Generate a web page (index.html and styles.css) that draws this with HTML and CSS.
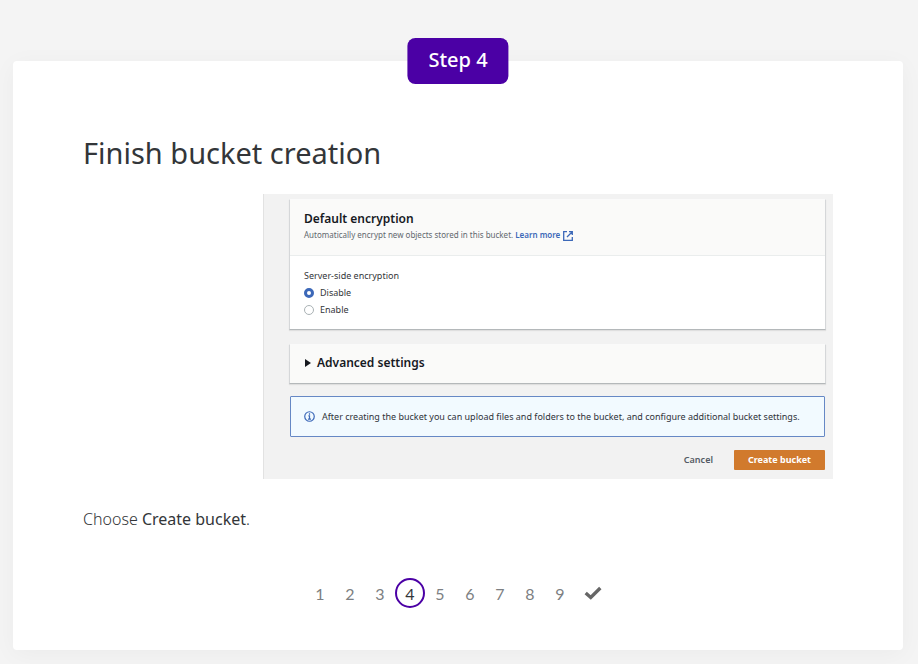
FILE: index.html
```html
<!DOCTYPE html>
<html lang="en">
<head>
<meta charset="utf-8">
<meta name="viewport" content="width=device-width, initial-scale=1">
<title>Step 4: Finish bucket creation</title>
<link rel="stylesheet" href="styles.css">
</head>
<body>
<main class="card">
  <div class="step">Step 4</div>
  <h1 class="title">Finish bucket creation</h1>

  <div class="console">
    <section class="panel">
      <header class="panel-head">
        <h2 class="panel-title">Default encryption</h2>
        <p class="hint">Automatically encrypt new objects stored in this bucket.
          <a class="learn" href="#">Learn more<svg class="external" viewBox="0 0 10 10" aria-hidden="true"><path d="M4 0.700H0.700V9.300H9.300V6M6 0.700H9.300V4M9.300 0.700L4 6"/></svg></a></p>
      </header>
      <fieldset class="options">
        <legend class="legend">Server-side encryption</legend>
        <label class="option"><input class="radio" type="radio" name="sse" checked>Disable</label>
        <label class="option"><input class="radio" type="radio" name="sse">Enable</label>
      </fieldset>
    </section>

    <details class="panel advanced">
      <summary class="panel-title summary"><svg class="caret" viewBox="0 0 6 8" aria-hidden="true"><path d="M0 0L6 4L0 8Z"/></svg>Advanced settings</summary>
    </details>

    <div class="notice">
      <svg class="info" viewBox="0 0 12 12" aria-hidden="true"><circle cx="6" cy="6" r="5.200"/><path d="M6 2.500V4M4.800 5.300H6V8.700M4.300 8.900H7.700"/></svg>
      <p class="notice-text">After creating the bucket you can upload files and folders to the bucket, and configure additional bucket settings.</p>
    </div>

    <div class="actions">
      <button class="button" type="button">Cancel</button>
      <button class="button primary" type="button">Create bucket</button>
    </div>
  </div>

  <p class="instruction">Choose <strong class="strong">Create bucket</strong>.</p>

  <nav class="pager" aria-label="Steps">
    <a class="page" href="#">1</a>
    <a class="page" href="#">2</a>
    <a class="page" href="#">3</a>
    <a class="page current" href="#" aria-current="step">4</a>
    <a class="page" href="#">5</a>
    <a class="page" href="#">6</a>
    <a class="page" href="#">7</a>
    <a class="page" href="#">8</a>
    <a class="page" href="#">9</a>
    <a class="page done" href="#" aria-label="Finish"><svg class="check" viewBox="0 0 16 12" aria-hidden="true"><path d="M1.500 6L6 10L14.500 1.500"/></svg></a>
  </nav>
</main>
</body>
</html>
```
FILE: styles.css
```css
* {
  box-sizing: border-box;
}

body {
  margin: 0;
  padding: 61px 15px 14px 13px;
  background: #f4f4f4;
  color: #333639;
  font-family: "Noto Sans", sans-serif;
}

h1, h2, p {
  margin: 0;
}

.card {
  position: relative;
  padding: 70px 70px 42px;
  border-radius: 4px;
  background: #fff;
  box-shadow: 0 4px 24px rgba(0, 0, 0, 0.04);
}

.step {
  position: absolute;
  top: -23px;
  left: 50%;
  transform: translateX(-50%);
  padding: 0 21px 2px;
  border-radius: 8px;
  background: #4b00a5;
  color: #fff;
  font-size: 20px;
  font-weight: 500;
  line-height: 44px;
  white-space: nowrap;
}

.title {
  margin-bottom: 19px;
  font-size: 29px;
  font-weight: 400;
  line-height: 44px;
}

.console {
  width: 76%;
  margin-left: auto;
  padding: 5px 8px 9px 26px;
  border-left: 1px solid #e2e2e2;
  background: #f2f2f2;
  font-size: 9px;
}

.panel {
  margin: 0 -1px 14px;
  border: 1px solid #d5d7d9;
  border-top-color: #fafafa;
  border-bottom-color: #b4b8ba;
  background: #fff;
  box-shadow: 0 1px 1px rgba(0, 0, 0, 0.08);
}

.panel-head {
  padding: 9px 14px 14px;
  border-bottom: 1px solid #eaeded;
  background: #fafaf9;
}

.panel-title {
  color: #16191f;
  font-size: 12px;
  font-weight: 600;
  line-height: 20px;
}

.hint {
  color: #62686e;
  font-size: 8px;
  line-height: 12px;
}

.learn {
  color: #3c68b8;
  font-weight: 600;
  text-decoration: none;
}

.external {
  width: 10px;
  height: 10px;
  margin-left: 3px;
  fill: none;
  stroke: #3c68b8;
  stroke-width: 1.300;
  vertical-align: middle;
}

.options {
  margin: 0;
  padding: 12px 14px 11px;
  border: 0;
}

.legend {
  float: left;
  width: 100%;
  padding: 0;
  line-height: 16px;
}

.option {
  display: flex;
  clear: both;
  align-items: center;
  gap: 6px;
  line-height: 17px;
}

.radio {
  width: 10px;
  height: 10px;
  margin: 0;
  border: 1px solid #aab2b5;
  border-radius: 50%;
  appearance: none;
  background: #fff;
}

.radio:checked {
  border: 3px solid #3c68b8;
}

.advanced {
  margin-bottom: 12px;
  background: #fafaf9;
}

.summary {
  display: flex;
  align-items: center;
  gap: 6px;
  padding: 8px 15px 10px;
  list-style: none;
}

.caret {
  width: 6px;
  height: 8px;
  fill: #16191f;
}

.notice {
  display: flex;
  align-items: center;
  gap: 7px;
  margin-bottom: 13px;
  padding: 12px 13px;
  border: 1px solid #6688c5;
  border-radius: 1px;
  background: #f2faff;
  color: #30333a;
}

.info {
  flex: none;
  width: 11px;
  height: 11px;
  fill: none;
  stroke: #3c68b8;
  stroke-width: 1.300;
}

.notice-text {
  line-height: 15px;
}

.actions {
  display: flex;
  justify-content: flex-end;
  gap: 7px;
}

.button {
  padding: 0 14px;
  border: 0;
  border-radius: 1px;
  background: none;
  color: #545b64;
  font-family: inherit;
  font-size: 9px;
  font-weight: 600;
  line-height: 20px;
}

.primary {
  background: #d17a2d;
  color: #fff;
  font-weight: 700;
}

.instruction {
  margin: 28px 0 47px;
  font-size: 16px;
  font-weight: 300;
  line-height: 24px;
}

.strong {
  font-weight: 400;
}

.pager {
  display: flex;
  justify-content: center;
  font-family: Lato, sans-serif;
  font-size: 16px;
}

.page {
  display: flex;
  align-items: center;
  justify-content: center;
  width: 30px;
  height: 30px;
  color: #7d7f82;
  text-decoration: none;
}

.current {
  border: 2px solid #4b00a5;
  border-radius: 50%;
  color: #333639;
}

.done {
  width: 36px;
}

.check {
  width: 18px;
  height: 14px;
  fill: none;
  stroke: #666;
  stroke-width: 3;
}
```
